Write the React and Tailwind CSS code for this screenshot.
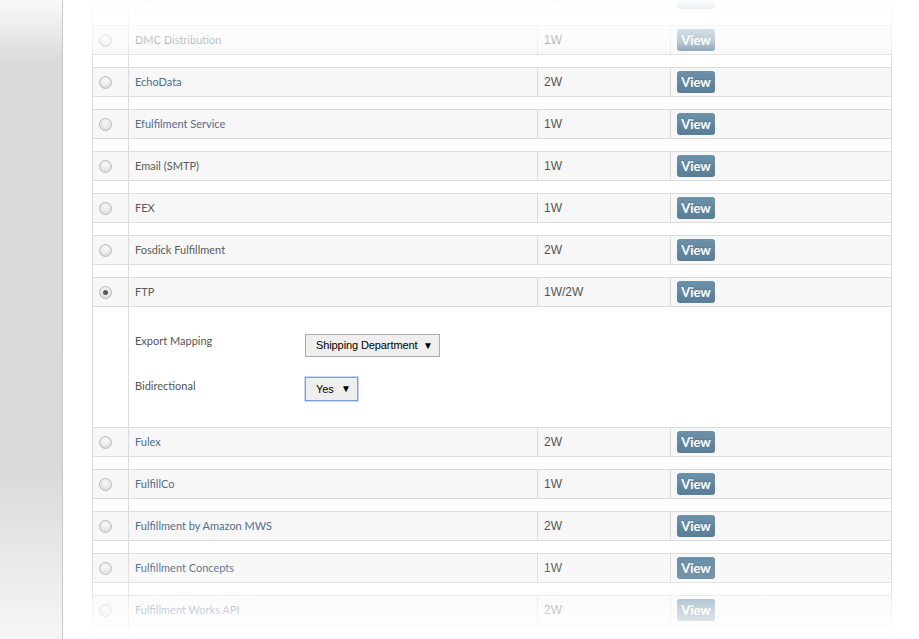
import React from "react"

const integrations = [
  { name: "Deposco", type: "1W", link: true },
  { name: "DMC Distribution", type: "1W", link: true },
  { name: "EchoData", type: "2W", link: true },
  { name: "Efulfilment Service", type: "1W", link: true },
  { name: "Email (SMTP)", type: "1W" },
  { name: "FEX", type: "1W" },
  { name: "Fosdick Fulfillment", type: "2W" },
  { name: "FTP", type: "1W/2W", checked: true, expanded: true },
  { name: "Fulex", type: "2W", link: true },
  { name: "FulfillCo", type: "1W", link: true },
  { name: "Fulfillment by Amazon MWS", type: "2W", link: true },
  { name: "Fulfillment Concepts", type: "1W", link: true },
  { name: "Fulfillment Works API", type: "2W", link: true },
  { name: "Fusion", type: "1W", link: true },
]

function Radio({ checked }) {
  return (
    <span className="w-[13px] h-[13px] rounded-full border border-[#b9b9b9] bg-[radial-gradient(circle_at_50%_35%,#fafafa,#d6d6d6)] flex items-center justify-center">
      {checked && <span className="w-[5px] h-[5px] rounded-full bg-[#5a5a5a]" />}
    </span>
  )
}

function FakeSelect({ value, width, focused }) {
  return (
    <div
      className={
        "flex items-center justify-between pl-[10px] pr-[6px] bg-[#efefef] font-['Liberation_Sans',Arial,sans-serif] text-[11px] text-black " +
        width +
        (focused
          ? " h-[24px] border border-[#7b9fdc] shadow-[0_0_0_1px_#c9d9f5]"
          : " h-[23px] border border-[#acacac]")
      }
    >
      <span className="tracking-[-0.1px]">{value}</span>
      <span className="text-[10px] leading-none">▼</span>
    </div>
  )
}

function DetailForm() {
  return (
    <div className="pl-[6px] pt-[27px] font-[Lato,sans-serif] text-[11px] text-[#555]">
      <div className="flex items-start">
        <div className="w-[170px] -mt-[1px]">Export Mapping</div>
        <FakeSelect value="Shipping Department" width="w-[135px]" />
      </div>
      <div className="flex items-start mt-[20px]">
        <div className="w-[170px] mt-[1px]">Bidirectional</div>
        <FakeSelect value="Yes" width="w-[53px]" focused />
      </div>
    </div>
  )
}

export default function App() {
  return (
    <div className="relative w-[919px] h-[639px] overflow-hidden bg-white flex">
      <div className="w-[63px] h-full border-r border-[#c6c6c6] bg-[linear-gradient(to_bottom,#fafafa_0px,#dadada_62px,#d9d9d9_465px,#f6f6f6_639px)]" />

      <div className="ml-[29px] w-[800px] -mt-[17px] border-x border-[#dcdcdc] self-start">
        {integrations.map((item) => (
          <div key={item.name}>
            <div className="flex h-[30px] border-y border-[#dcdcdc] bg-[#f7f7f7]">
              <div className="w-[35px] pl-[6px] flex items-center">
                <Radio checked={item.checked} />
              </div>
              <div
                className={
                  "w-[409px] border-l border-[#dcdcdc] pl-[6px] flex items-center font-[Lato,sans-serif] text-[11px] " +
                  (item.link ? "text-[#536d8e]" : "text-[#5a5a5a]")
                }
              >
                {item.name}
              </div>
              <div className="w-[133px] border-l border-[#dcdcdc] pl-[6px] flex items-center font-['Liberation_Sans',Arial,sans-serif] text-[12px] text-[#555]">
                {item.type}
              </div>
              <div className="w-[221px] border-l border-[#dcdcdc] pl-[6px] flex items-center">
                <button className="w-[38px] h-[22px] rounded-[3px] bg-[linear-gradient(to_bottom,#6c91a9,#587d96)] text-white font-[Lato,sans-serif] font-bold text-[13px] leading-none [text-shadow:0_-1px_0_rgba(0,0,0,0.15)]">
                  View
                </button>
              </div>
            </div>
            <div className={"flex " + (item.expanded ? "h-[120px]" : "h-[12px]")}>
              <div className="w-[35px]" />
              <div className="flex-1 border-l border-[#dcdcdc]">
                {item.expanded && <DetailForm />}
              </div>
            </div>
          </div>
        ))}
      </div>

      <div className="absolute left-[64px] right-0 top-0 h-[66px] pointer-events-none bg-[linear-gradient(to_bottom,rgba(255,255,255,0.97)_0px,rgba(255,255,255,0.6)_40px,rgba(255,255,255,0)_64px)]" />
      <div className="absolute left-[64px] right-0 bottom-0 h-[82px] pointer-events-none bg-[linear-gradient(to_bottom,rgba(255,255,255,0)_0px,rgba(255,255,255,0.2)_25px,rgba(255,255,255,0.65)_52px,rgba(255,255,255,0.97)_82px)]" />
    </div>
  )
}
